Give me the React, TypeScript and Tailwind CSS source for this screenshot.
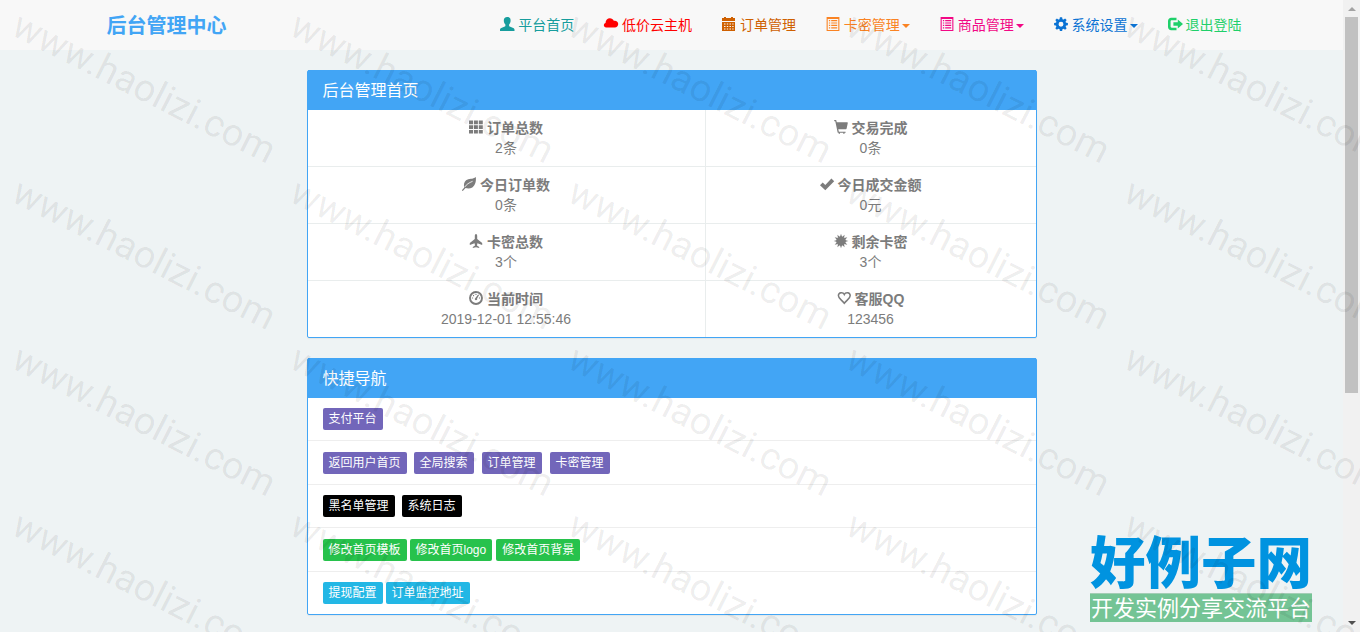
import type { ReactNode } from "react";

const icons: Record<string, ReactNode> = {
  user: (
    <path d="M7.200 0c2.200 0 3.400 1.300 3.400 3.400 0 1.700-.6 3.200-1.500 4.100v1.200c0 .4.2.7.6.9l3.500 1.300c.8.300 1.300.9 1.300 1.700V14H0v-1.400c0-.8.5-1.400 1.300-1.700l3.500-1.300c.4-.2.6-.5.6-.9V7.500C4.400 6.600 3.800 5.100 3.800 3.400 3.800 1.300 5 0 7.200 0z" />
  ),
  cloud: (
    <path
      transform="matrix(.01167 0 0 -.01167 0 14)"
      d="M503 1089q110 0 200.500-59.500t134.500-156.500q44 14 90 14q120 0 205-86.500t85-206.500q0-121-85-207.500t-205-86.500h-750q-79 0-135.500 57t-56.500 137q0 69 42.500 122.500t108.500 67.500q-2 12-2 37q0 153 108 260.500t260 107.500z"
    />
  ),
  calendar: (
    <path
      fillRule="evenodd"
      d="M0 1h2V0h2v1h5V0h2v1h2v3H0zM0 5h13v9H0zM2 6.500v1h1.500v-1zM4.800 6.500v1h1.400v-1zM7.500 6.500v1H9v-1zM10.200 6.500v1h1.400v-1zM2 9v1h1.500V9zM4.800 9v1h1.400V9zM7.500 9v1H9V9zM10.200 9v1h1.400V9zM2 11.500v1h1.500v-1zM4.800 11.500v1h1.400v-1zM7.500 11.500v1H9v-1zM10.200 11.500v1h1.400v-1z"
    />
  ),
  list: (
    <path
      fillRule="evenodd"
      d="M.6 0h12.800v14H.6zM1.700 2v10.900h10.600V2zM2.900 3h1.300v1.200H2.900zM5.200 3h6v1.200h-6zM2.900 5.400h1.300v1.200H2.900zM5.200 5.400h6v1.200h-6zM2.900 7.800h1.300V9H2.900zM5.200 7.800h6V9h-6zM2.900 10.300h1.300v1.200H2.900zM5.200 10.300h6v1.200h-6z"
    />
  ),
  cog: (
    <g>
      <circle cx="7" cy="7.200" r="3.800" fill="none" stroke="currentColor" strokeWidth="2.700" />
      {[0, 45, 90, 135, 180, 225, 270, 315].map((a) => (
        <path key={a} transform={`rotate(${a} 7 7.200)`} d="M5.400 3L5.900.3h2.200L8.600 3z" />
      ))}
    </g>
  ),
  logout: (
    <path d="M8.500.8H3.200C1.400.8 0 2.200 0 4v6c0 1.800 1.400 3.200 3.200 3.200h5.300v-2.500H3.700c-.7 0-1.100-.4-1.100-1.100V4.400c0-.7.4-1.100 1.100-1.100h4.800zM9.800 2.600L15 7l-5.200 4.400V8.700H5.400V5.300h4.400z" />
  ),
  th: (
    <path d="M0 .6h4v3.600H0zM4.900.6h4v3.600h-4zM9.800.6h4v3.600h-4zM0 5.300h4v3.600H0zM4.900 5.300h4v3.600h-4zM9.800 5.300h4v3.600h-4zM0 10h4v3.600H0zM4.900 10h4v3.600h-4zM9.800 10h4v3.600h-4z" />
  ),
  cart: (
    <path
      transform="matrix(.01167 0 0 -.01167 0 14)"
      d="M56 1200h94q17 0 31-11t18-27l38-162h896q24 0 39-18.500t10-42.500l-100-475q-5-21-27-42.500t-55-21.500h-633l48-200h535q21 0 35.500-14.500t14.500-35.500t-14.500-35.500t-35.500-14.500h-50v-50q0-21-14.500-35.500t-35.500-14.500t-35.500 14.500t-14.500 35.500v50h-300v-50q0-21-14.500-35.500t-35.500-14.500t-35.500 14.500t-14.500 35.500v50h-31q-18 0-32.500 10t-20.500 19l-5 10l-201 961h-54q-20 0-35 14.500t-15 35.500t15 35.500t35 14.500z"
    />
  ),
  leaf: (
    <g>
      <path d="M13.800 0c.5 4.300-.5 8.400-3.500 10.400-2.200 1.400-4.700 1.200-6.700.7L1 13.800c-.4.400-1.300-.1-.9-.7l2.200-2.700C1.500 7.800 2 5 4.100 3.300 6.700 1.200 11 2.700 13.800 0z" />
      <path d="M2.800 10C4.500 7.300 7 5.800 10.600 4.300" fill="none" stroke="white" strokeWidth=".8" />
    </g>
  ),
  ok: <path d="M0 8.200l2.700-2.800 2.600 2.500L11.400 1.600 14.200 4.300l-8.900 9z" />,
  plane: (
    <path d="M7 0c.9 0 1.200 1 1.200 2.200v2.700l5 4.200v2L8.400 9.300 8 11.600l2.200 1.500v.9L7 13.200 3.800 14v-.9L6 11.600l-.4-2.300L.8 11.100v-2l5-4.200V2.200C5.800 1 6.100 0 7 0z" />
  ),
  certificate: (
    <g>
      <circle cx="7" cy="7" r="4.600" />
      {[0, 30, 60, 90, 120, 150, 180, 210, 240, 270, 300, 330].map((a) => (
        <path key={a} transform={`rotate(${a} 7 7)`} d="M5.900 3L7-.3 8.100 3z" />
      ))}
    </g>
  ),
  dashboard: (
    <g>
      <circle cx="7" cy="7" r="6" fill="none" stroke="currentColor" strokeWidth="1.900" />
      <path d="M6.500 2.900h1v1.200h-1zM4 4h1.100v1.200H4zM2.900 6.400h1.200v1.100H2.900zM9.900 6.400h1.200v1.100H9.900zM9.100 3.400l1 .5-2 3.700c.4.900-.2 1.700-1.100 1.700-1.100 0-1.600-1.300-.8-2z" />
    </g>
  ),
  heart: (
    <path
      d="M7.300 3.500C6.200 1 1.400.9 1.400 4.800 1.400 7.400 4.800 9 7.300 12.300 9.800 9 13.200 7.400 13.200 4.800 13.200.9 8.400 1 7.300 3.500z"
      fill="none"
      stroke="currentColor"
      strokeWidth="1.500"
    />
  ),
};

function Icon({ name }: { name: string }) {
  return (
    <svg viewBox="0 0 14 14" className="size-3.5 shrink-0 overflow-visible fill-current">
      {icons[name]}
    </svg>
  );
}

const navItems = [
  { icon: "user", label: "平台首页", color: "text-[#179d9d]" },
  { icon: "cloud", label: "低价云主机", color: "text-[#ff0000]" },
  { icon: "calendar", label: "订单管理", color: "text-[#cf6000]" },
  { icon: "list", label: "卡密管理", color: "text-[#fa8323]", caret: true },
  { icon: "list", label: "商品管理", color: "text-[#f20885]", caret: true },
  { icon: "cog", label: "系统设置", color: "text-[#0b73d4]", caret: true },
  { icon: "logout", label: "退出登陆", color: "text-[#1fd06a]" },
];

const stats = [
  { icon: "th", label: "订单总数", value: "2条" },
  { icon: "cart", label: "交易完成", value: "0条" },
  { icon: "leaf", label: "今日订单数", value: "0条" },
  { icon: "ok", label: "今日成交金额", value: "0元" },
  { icon: "plane", label: "卡密总数", value: "3个" },
  { icon: "certificate", label: "剩余卡密", value: "3个" },
  { icon: "dashboard", label: "当前时间", value: "2019-12-01 12:55:46" },
  { icon: "heart", label: "客服QQ", value: "123456" },
];

const shortcuts = [
  { row: "h-[42px]", color: "bg-[#7266ba]", links: ["支付平台"] },
  {
    row: "h-11 gap-2 border-t pt-px [&>a:first-child]:-mr-px",
    color: "bg-[#7266ba]",
    links: ["返回用户首页", "全局搜索", "订单管理", "卡密管理"],
  },
  { row: "h-[43px] gap-[7px] border-t", color: "bg-black", links: ["黑名单管理", "系统日志"] },
  {
    row: "h-11 gap-1 border-t pt-px [&>a:first-child]:-mr-px",
    color: "bg-[#27c24c]",
    links: ["修改首页模板", "修改首页logo", "修改首页背景"],
  },
  { row: "h-[43px] gap-[3px] border-t", color: "bg-[#23b7e5]", links: ["提现配置", "订单监控地址"] },
];

function Panel({ title, children }: { title: string; children: ReactNode }) {
  return (
    <section className="rounded-xs border border-[#42a5f5] bg-white shadow-[0_1px_1px_rgba(0,0,0,0.05)]">
      <h3 className="-mt-px flex h-10 items-center bg-[#42a5f5] px-[15px] pt-0.5 text-base text-white">{title}</h3>
      {children}
    </section>
  );
}

function Watermark() {
  return (
    <svg className="pointer-events-none absolute inset-0 h-full w-full" fill="#000" fillOpacity=".075">
      {[34, 200.500, 367, 533.500].map((y) =>
        [9.500, 287.500, 565.500, 843.500, 1121.500].map((x) => (
          <text
            key={`${x}-${y}`}
            transform={`translate(${x} ${y}) rotate(26.800)`}
            textLength="289"
            fontSize="38"
            fontFamily="Roboto, sans-serif"
          >
            www.haolizi.com
          </text>
        )),
      )}
    </svg>
  );
}

export default function App() {
  return (
    <div className="relative flex h-[632px] w-[1360px] overflow-hidden bg-[#eef3f4] font-['Liberation_Sans','Noto_Sans_CJK_SC',sans-serif] text-sm leading-5 text-[#7c7c7c]">
      <div className="w-[1343px]">
        <header className="h-[50px] bg-[#f8f8f8]">
          <div className="mx-auto flex h-full w-[1170px] items-center justify-between pl-5">
            <div className="pt-0.5 text-xl font-bold text-[#42a5f5]">后台管理中心</div>
            <nav className="flex">
              {navItems.map((item) => (
                <a key={item.label} className={`flex items-center px-[15px] ${item.color}`}>
                  <span className="-mt-0.5 mr-[3.900px]">
                    <Icon name={item.icon} />
                  </span>
                  {item.label}
                  {item.caret && (
                    <span className="ml-0.5 mt-0.5 border-x-4 border-t-4 border-x-transparent border-t-current" />
                  )}
                </a>
              ))}
            </nav>
          </div>
        </header>

        <main className="mx-auto mt-5 flex w-[730px] flex-col gap-5">
          <Panel title="后台管理首页">
            <div className="grid grid-cols-[398px_1fr]">
              {stats.map((s, i) => (
                <div
                  key={s.label}
                  className={`py-2 text-center ${i % 2 === 0 ? "border-r" : ""} ${i > 1 ? "border-t" : ""} border-[#e9eded]`}
                >
                  <div className="flex items-center justify-center gap-[3.900px] font-bold">
                    <span className="-mt-0.5">
                      <Icon name={s.icon} />
                    </span>
                    {s.label}
                  </div>
                  <div>{s.value}</div>
                </div>
              ))}
            </div>
          </Panel>

          <Panel title="快捷导航">
            {shortcuts.map((s) => (
              <div key={s.links[0]} className={`flex items-center border-[#eeeeee] px-[15px] ${s.row}`}>
                {s.links.map((link) => (
                  <a
                    key={link}
                    className={`flex h-[22px] items-center rounded-xs px-1.5 text-xs text-white ${s.color}`}
                  >
                    {link}
                  </a>
                ))}
              </div>
            ))}
          </Panel>
        </main>
      </div>

      <div className="flex w-[17px] flex-col items-center justify-between bg-[#f1f1f1]">
        <div className="flex flex-col items-center">
          <span className="mt-[7px] border-x-4 border-b-4 border-x-transparent border-b-[#a3a3a3]" />
          <div className="mt-1.5 h-[376px] w-[13px] bg-[#c1c1c1]" />
        </div>
        <span className="mb-[7px] border-x-4 border-t-4 border-x-transparent border-t-[#505050]" />
      </div>

      <div className="absolute left-[1090px] top-[529px] w-[222px] font-['Noto_Sans_CJK_SC',sans-serif]">
        <div className="h-16 whitespace-nowrap text-[55.500px] font-black leading-[60px] text-[#0093e0]">
          好例子网
        </div>
        <div className="flex h-[29px] items-center justify-center whitespace-nowrap border-t border-[#a3cdb5] bg-[#74c495] pb-1 text-[22px] leading-6 text-white">
          开发实例分享交流平台
        </div>
      </div>

      <Watermark />
    </div>
  );
}
